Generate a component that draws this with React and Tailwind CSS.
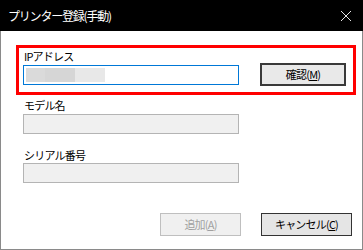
import React from 'react'

const font = { fontFamily: '"Noto Sans CJK JP", "Noto Sans", sans-serif' }

const App = () => {
    return <div className="w-[363px] h-[250px] bg-white text-[11px] tracking-[-0.8px] text-black" style={font}>
        <div className="h-[31px] bg-black flex items-center justify-between pl-[8px] pr-[10px]">
            <span className="text-white text-[12px] tracking-[-1.2px] leading-none">プリンター登録(手動)</span>
            <svg width="12" height="12" viewBox="0 0 12 12" className="mr-[1px]">
                <path d="M1 1 L11 11 M11 1 L1 11" stroke="#e6e6e6" strokeWidth="1" fill="none" />
            </svg>
        </div>
        <div className="h-[219px] border-l border-r border-b border-[#8a8a8a] flex flex-col">
            <div className="ml-[15px] mt-[14px] w-[340px] border-[3px] border-[#ff0000] pl-[4px] pr-[7px] pt-[1px] pb-[6px]">
                <div className="h-[14px] leading-[14px] pl-[1px]">IPアドレス</div>
                <div className="flex items-center gap-[21px] h-[23px]">
                    <div className="w-[216px] h-[20px] border border-[#0078d7] bg-white flex items-center pl-[2px]">
                        <div className="flex h-[14px]">
                            <div className="w-[19px] bg-[#dadada]"></div>
                            <div className="w-[30px] bg-[#d6d6d6]"></div>
                            <div className="w-[30px] bg-[#e8e8e8]"></div>
                        </div>
                    </div>
                    <button className="w-[86px] h-[23px] border-2 border-[#3a3a3a] bg-[#e9e9e9] flex items-center justify-center leading-none">
                        確認(<u>M</u>)
                    </button>
                </div>
            </div>
            <div className="ml-[22px] mt-[2px] h-[16px] leading-[16px] pl-[1px]">モデル名</div>
            <div className="ml-[22px] mt-[1px] w-[216px] h-[20px] border border-[#b4b4b4] bg-[#f0f0f0]"></div>
            <div className="ml-[22px] mt-[13px] h-[16px] leading-[16px] pl-[1px]">シリアル番号</div>
            <div className="ml-[22px] w-[216px] h-[20px] border border-[#b4b4b4] bg-[#f0f0f0]"></div>
            <div className="flex justify-end gap-[20px] mt-[30px] pr-[10px]">
                <button disabled className="w-[81px] h-[23px] border border-[#bfbfbf] bg-[#f0f0f0] text-[#a0a0a0] flex items-center justify-center leading-none">
                    追加(<u>A</u>)
                </button>
                <button className="w-[91px] h-[23px] border border-[#333333] bg-[#e5e5e5] flex items-center justify-center leading-none">
                    キャンセル(<u>C</u>)
                </button>
            </div>
        </div>
    </div>
}

export default App
